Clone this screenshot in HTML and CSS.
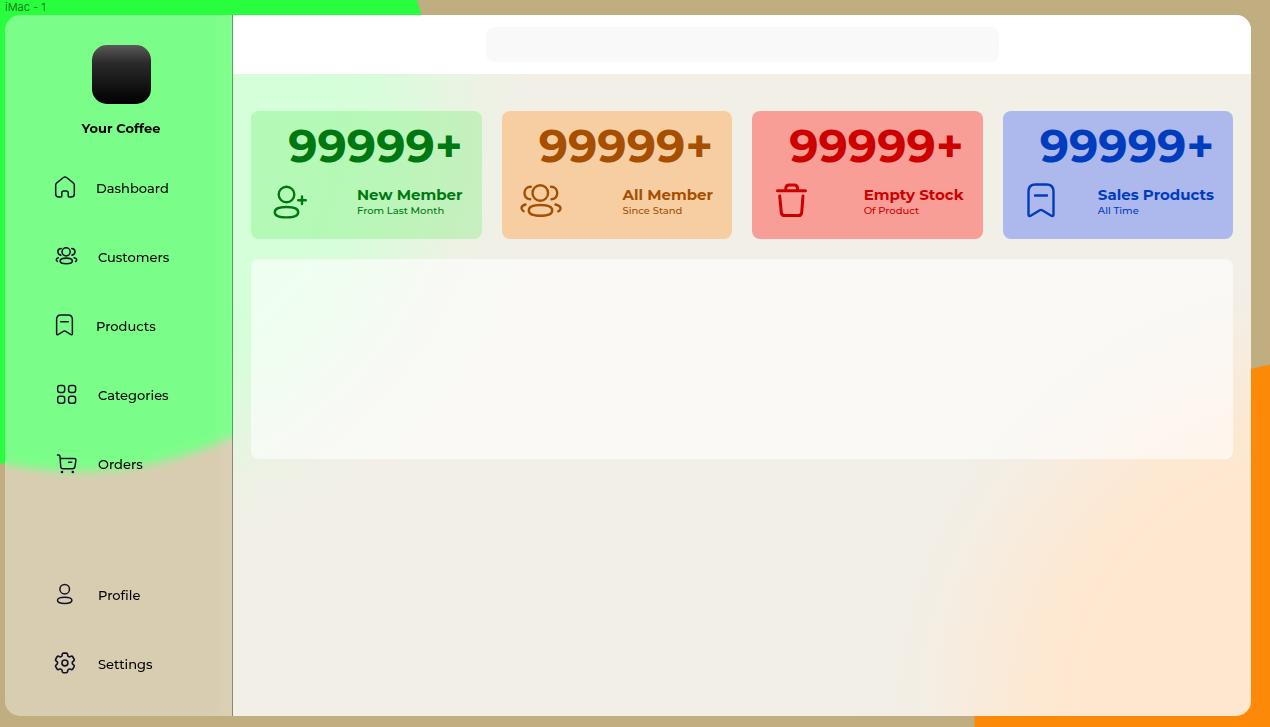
FILE: index.html
```html
<!DOCTYPE html>
<html lang="en">
<head>
<meta charset="utf-8">
<meta name="viewport" content="width=device-width, initial-scale=1">
<title>Your Coffee</title>
<link rel="stylesheet" href="styles.css">
</head>
<body>
<svg class="defs" aria-hidden="true">
  <symbol id="users" viewBox="0 0 44 40">
    <circle cx="21.3" cy="13" r="7.8"/>
    <path d="M9.8 30.4C9.8 26.6 15 25 21.5 25S33.2 26.6 33.2 30.4 28 35.7 21.5 35.7 9.8 34.200 9.800 30.400Z"/>
    <path d="M11.800 6.700C8 6.800 5.500 9.500 5.500 12.900S7.800 18.800 11.200 19.300M32 6.700C35.800 6.800 38.200 9.500 38.200 12.900S36 18.800 32.500 19.300M6.500 24.500C3.800 25.300 2.500 26.400 2.500 28S3.400 30.500 4.600 31.200M36.500 24.500C39.600 25.300 41.500 26.400 41.500 28.200S40.600 30.700 39.200 31.300"/>
  </symbol>
  <symbol id="bookmark" viewBox="8 3 28 35">
    <path d="M9.500 11.500Q9.500 4.500 16.500 4.500H27.500Q34.500 4.500 34.500 11.500V34.500Q34.500 36.800 32.300 35.700L23.200 30.300Q22 29.700 20.800 30.300L11.700 35.700Q9.500 36.800 9.500 34.500ZM16 15.500H28"/>
  </symbol>
</svg>

<p class="frame-label">iMac - 1</p>
<div class="window">
  <aside class="sidebar">
    <div class="logo"></div>
    <h1 class="brand">Your Coffee</h1>
    <nav class="nav">
      <a class="nav-item" href="#dashboard">
        <svg class="icon icon-narrow" viewBox="0 0 22 24"><path d="M6.800 21H4.700A3 3 0 0 1 1.700 18V9Q1.700 7.600 2.800 6.800L9.400 1.500Q11 .3 12.600 1.500L19.200 6.800Q20.300 7.600 20.300 9V18A3 3 0 0 1 17.300 21H15.200Q14.200 21 14.200 20V17A2 2 0 0 0 12.200 15H9.800A2 2 0 0 0 7.800 17V20Q7.800 21 6.800 21Z"/></svg>
        Dashboard
      </a>
      <a class="nav-item" href="#customers">
        <svg class="icon icon-users"><use href="#users"/></svg>
        Customers
      </a>
      <a class="nav-item" href="#products">
        <svg class="icon icon-narrow icon-bookmark"><use href="#bookmark"/></svg>
        Products
      </a>
      <a class="nav-item" href="#categories">
        <svg class="icon" viewBox="0 0 24 24"><rect x="3.700" y="2.500" width="7" height="7" rx="2.200"/><rect x="14.600" y="2.500" width="7" height="7" rx="2.200"/><rect x="3.700" y="13.300" width="7" height="7" rx="2.200"/><rect x="14.600" y="13.300" width="7" height="7" rx="2.200"/></svg>
        Categories
      </a>
      <a class="nav-item" href="#orders">
        <svg class="icon" viewBox="0 0 24 24"><path d="M3.500 2.900H4.600Q5.900 2.900 6 4.200L6.700 14.500Q6.900 16.700 9 16.700H18.600Q20.600 16.700 20.900 14.700L21.900 8.500Q22.100 6.500 20.200 6.500H6.300M14.700 10.200H17.700"/><circle class="dot" cx="8" cy="20" r="1.300"/><circle class="dot" cx="18.800" cy="20" r="1.300"/></svg>
        Orders
      </a>
    </nav>
    <nav class="nav nav-bottom">
      <a class="nav-item" href="#profile">
        <svg class="icon" viewBox="0 0 24 24"><circle cx="10.700" cy="6.200" r="4.800"/><path d="M3.500 17.300C3.500 15 6.500 14.200 10.700 14.200S17.900 15 17.900 17.300 14.900 20.500 10.700 20.500 3.500 19.600 3.500 17.300Z"/></svg>
        Profile
      </a>
      <a class="nav-item" href="#settings">
        <svg class="icon" viewBox="2 2 22 22"><path d="M9.594 3.940c.09-.542.56-.94 1.110-.94h2.593c.55 0 1.020.398 1.110.94l.213 1.281c.063.374.313.686.645.87.074.04.147.083.22.127.325.196.72.257 1.075.124l1.217-.456a1.125 1.125 0 0 1 1.370.49l1.296 2.247a1.125 1.125 0 0 1-.26 1.431l-1.003.827c-.293.241-.438.613-.43.992a7.723 7.723 0 0 1 0 .255c-.008.378.137.75.43.991l1.004.827c.424.35.534.955.26 1.430l-1.298 2.247a1.125 1.125 0 0 1-1.369.491l-1.217-.456c-.355-.133-.75-.072-1.076.124a6.470 6.470 0 0 1-.22.128c-.331.183-.581.495-.644.869l-.213 1.281c-.09.543-.56.94-1.110.94h-2.594c-.55 0-1.019-.398-1.110-.94l-.213-1.281c-.062-.374-.312-.686-.644-.87a6.520 6.520 0 0 1-.22-.127c-.325-.196-.72-.257-1.076-.124l-1.217.456a1.125 1.125 0 0 1-1.369-.49l-1.297-2.247a1.125 1.125 0 0 1 .26-1.431l1.004-.827c.292-.24.437-.613.43-.991a6.932 6.932 0 0 1 0-.255c.007-.38-.138-.751-.43-.992l-1.004-.827a1.125 1.125 0 0 1-.26-1.430l1.297-2.247a1.125 1.125 0 0 1 1.370-.491l1.216.456c.356.133.751.072 1.076-.124.072-.044.146-.086.22-.128.332-.183.582-.495.644-.869l.214-1.280Z"/><circle cx="12" cy="12" r="2.700"/></svg>
        Settings
      </a>
    </nav>
  </aside>

  <div class="page">
    <header class="topbar">
      <input class="search" type="search" aria-label="Search">
    </header>
    <main class="content">
      <section class="stats">
        <article class="card card-green">
          <p class="value">99999+</p>
          <div class="card-row">
            <svg class="card-icon" viewBox="0 0 44 40"><circle cx="18.500" cy="14.500" r="7.800"/><path d="M6.800 32.200C6.800 28.400 12 27 18.500 27S30.200 28.400 30.200 32.200 25 37.400 18.500 37.400 6.800 36 6.800 32.200ZM30.200 20.300H37.800M34 16.500V24.100"/></svg>
            <div class="card-text">
              <h2 class="title">New Member</h2>
              <p class="note">From Last Month</p>
            </div>
          </div>
        </article>
        <article class="card card-orange">
          <p class="value">99999+</p>
          <div class="card-row">
            <svg class="card-icon"><use href="#users"/></svg>
            <div class="card-text">
              <h2 class="title">All Member</h2>
              <p class="note">Since Stand</p>
            </div>
          </div>
        </article>
        <article class="card card-red">
          <p class="value">99999+</p>
          <div class="card-row">
            <svg class="card-icon" viewBox="0 0 44 40"><path class="bold" d="M8.500 10.800H36.500M16.800 10.500V8.500Q16.800 5 20.300 5H25Q28.500 5 28.500 8.500V10.500M10.700 16L12.300 32.500Q12.600 35.600 15.700 35.600H29.300Q32.400 35.600 32.700 32.500L34 16"/></svg>
            <div class="card-text">
              <h2 class="title">Empty Stock</h2>
              <p class="note">Of Product</p>
            </div>
          </div>
        </article>
        <article class="card card-blue">
          <p class="value">99999+</p>
          <div class="card-row">
            <svg class="card-icon" viewBox="0 0 44 40"><use href="#bookmark" x="7" y="3" width="28" height="35"/></svg>
            <div class="card-text">
              <h2 class="title">Sales Products</h2>
              <p class="note">All Time</p>
            </div>
          </div>
        </article>
      </section>
      <section class="panel" aria-label="Overview"></section>
    </main>
  </div>
</div>
</body>
</html>
```
FILE: styles.css
```css
* {
  box-sizing: border-box;
}

body {
  display: flex;
  flex-direction: column;
  min-height: 100vh;
  margin: 0;
  padding: 0 19px 11px 5px;
  background:
    radial-gradient(circle at 78px 114px, #28fe3e 357px, transparent 358px),
    radial-gradient(circle at calc(100% + 72px) calc(100% - 2px), #fc8a08 367px, transparent 368px),
    #c0ae80;
  color: #000;
  font-family: Montserrat, Inter, "Open Sans", sans-serif;
}

h1, h2, p {
  margin: 0;
}

.defs {
  position: absolute;
  width: 0;
  height: 0;
}

.frame-label {
  color: rgba(0, 0, 0, 0.55);
  font-family: Inter, sans-serif;
  font-size: 11px;
  line-height: 15px;
}

.window {
  display: grid;
  flex: 1;
  grid-template-columns: 228px minmax(0, 1fr);
}

/* Sidebar */
.sidebar {
  display: flex;
  flex-direction: column;
  padding: 30px 0 40px;
  border-right: 1px solid rgba(0, 0, 0, 0.35);
  border-radius: 15px 0 0 15px;
  background: linear-gradient(to left, rgba(255, 255, 255, 0.43), rgba(255, 255, 255, 0.39) 20px);
  backdrop-filter: blur(5px);
}

.logo {
  width: 59px;
  height: 59px;
  margin-left: 87px;
  border-radius: 15px;
  background: linear-gradient(#5a5a5a, #2b2b2b 30%, #000);
}

.brand {
  margin: 14px 0 38px 5px;
  font-size: 13px;
  font-weight: 700;
  line-height: 20px;
  text-align: center;
}

.nav {
  display: flex;
  flex-direction: column;
  gap: 45px;
  padding-left: 49px;
}

.nav-bottom {
  margin-top: auto;
}

.nav-item {
  display: flex;
  align-items: center;
  gap: 20px;
  color: inherit;
  font-size: 13px;
  font-weight: 500;
  line-height: 24px;
  text-decoration: none;
}

.icon,
.card-icon {
  flex: none;
  fill: none;
  stroke: currentColor;
  stroke-linecap: round;
  stroke-linejoin: round;
}

.icon {
  width: 24px;
  height: 24px;
  color: #14122b;
  stroke-width: 1.5px;
}

.icon-narrow {
  width: 22px;
}

.icon-users {
  padding: 0 0 3px 1px;
  stroke-width: 3px;
}

.icon-bookmark {
  padding: 0 1px 2px 0;
  stroke-width: 2.4px;
}

.dot {
  fill: currentColor;
  stroke: none;
}

/* Main area */
.page {
  display: flex;
  flex-direction: column;
  overflow: hidden;
  border-radius: 0 15px 15px 0;
  background:
    radial-gradient(circle at -155px 99px,
      rgba(212, 255, 216, 1) 238px,
      rgba(212, 255, 216, 0.96) 268px,
      rgba(212, 255, 216, 0.82) 308px,
      rgba(212, 255, 216, 0.47) 358px,
      rgba(212, 255, 216, 0.14) 408px,
      rgba(212, 255, 216, 0.03) 448px,
      rgba(212, 255, 216, 0) 478px),
    radial-gradient(circle at calc(100% + 91px) calc(100% + 9px),
      rgba(255, 231, 207, 1) 247px,
      rgba(255, 231, 207, 0.96) 277px,
      rgba(255, 231, 207, 0.82) 317px,
      rgba(255, 231, 207, 0.47) 367px,
      rgba(255, 231, 207, 0.14) 417px,
      rgba(255, 231, 207, 0.03) 457px,
      rgba(255, 231, 207, 0) 487px),
    #f2efe7;
}

.topbar {
  display: flex;
  align-items: center;
  justify-content: center;
  padding: 12px 0;
  background: #fff;
}

.search {
  width: calc(50% + 4px);
  height: 35px;
  padding: 0 12px;
  border: 0;
  border-radius: 8px;
  background: #f9f9f9;
  font: inherit;
  font-size: 13px;
}

.content {
  display: flex;
  flex-direction: column;
  gap: 20px;
  padding: 37px 18px;
}

.stats {
  display: grid;
  grid-template-columns: repeat(4, minmax(0, 1fr));
  gap: 20px;
}

.card {
  min-height: 128px;
  padding: 7px 19px 15px 17px;
  border-radius: 8px;
}

.card-green {
  background: rgba(110, 235, 103, 0.3);
  color: #007812;
}

.card-orange {
  background: #f7cea2;
  color: #a64f00;
}

.card-red {
  background: #f99e97;
  color: #cd0000;
}

.card-blue {
  background: #adb8ed;
  color: #003cbe;
}

.value {
  font-size: 46px;
  font-weight: 700;
  line-height: 56px;
  text-align: right;
}

.card-row {
  display: flex;
  align-items: center;
  justify-content: space-between;
  margin-top: 6px;
}

.card-icon {
  width: 44px;
  height: 40px;
  stroke-width: 2.4px;
}

.bold {
  stroke-width: 3px;
}

.card-text {
  padding-top: 4px;
}

.title {
  font-size: 15px;
  font-weight: 700;
  line-height: 18px;
}

.note {
  font-size: 10px;
  font-weight: 500;
  line-height: 14px;
}

.panel {
  min-height: 200px;
  border-radius: 8px;
  background: rgba(255, 255, 255, 0.6);
}
```
